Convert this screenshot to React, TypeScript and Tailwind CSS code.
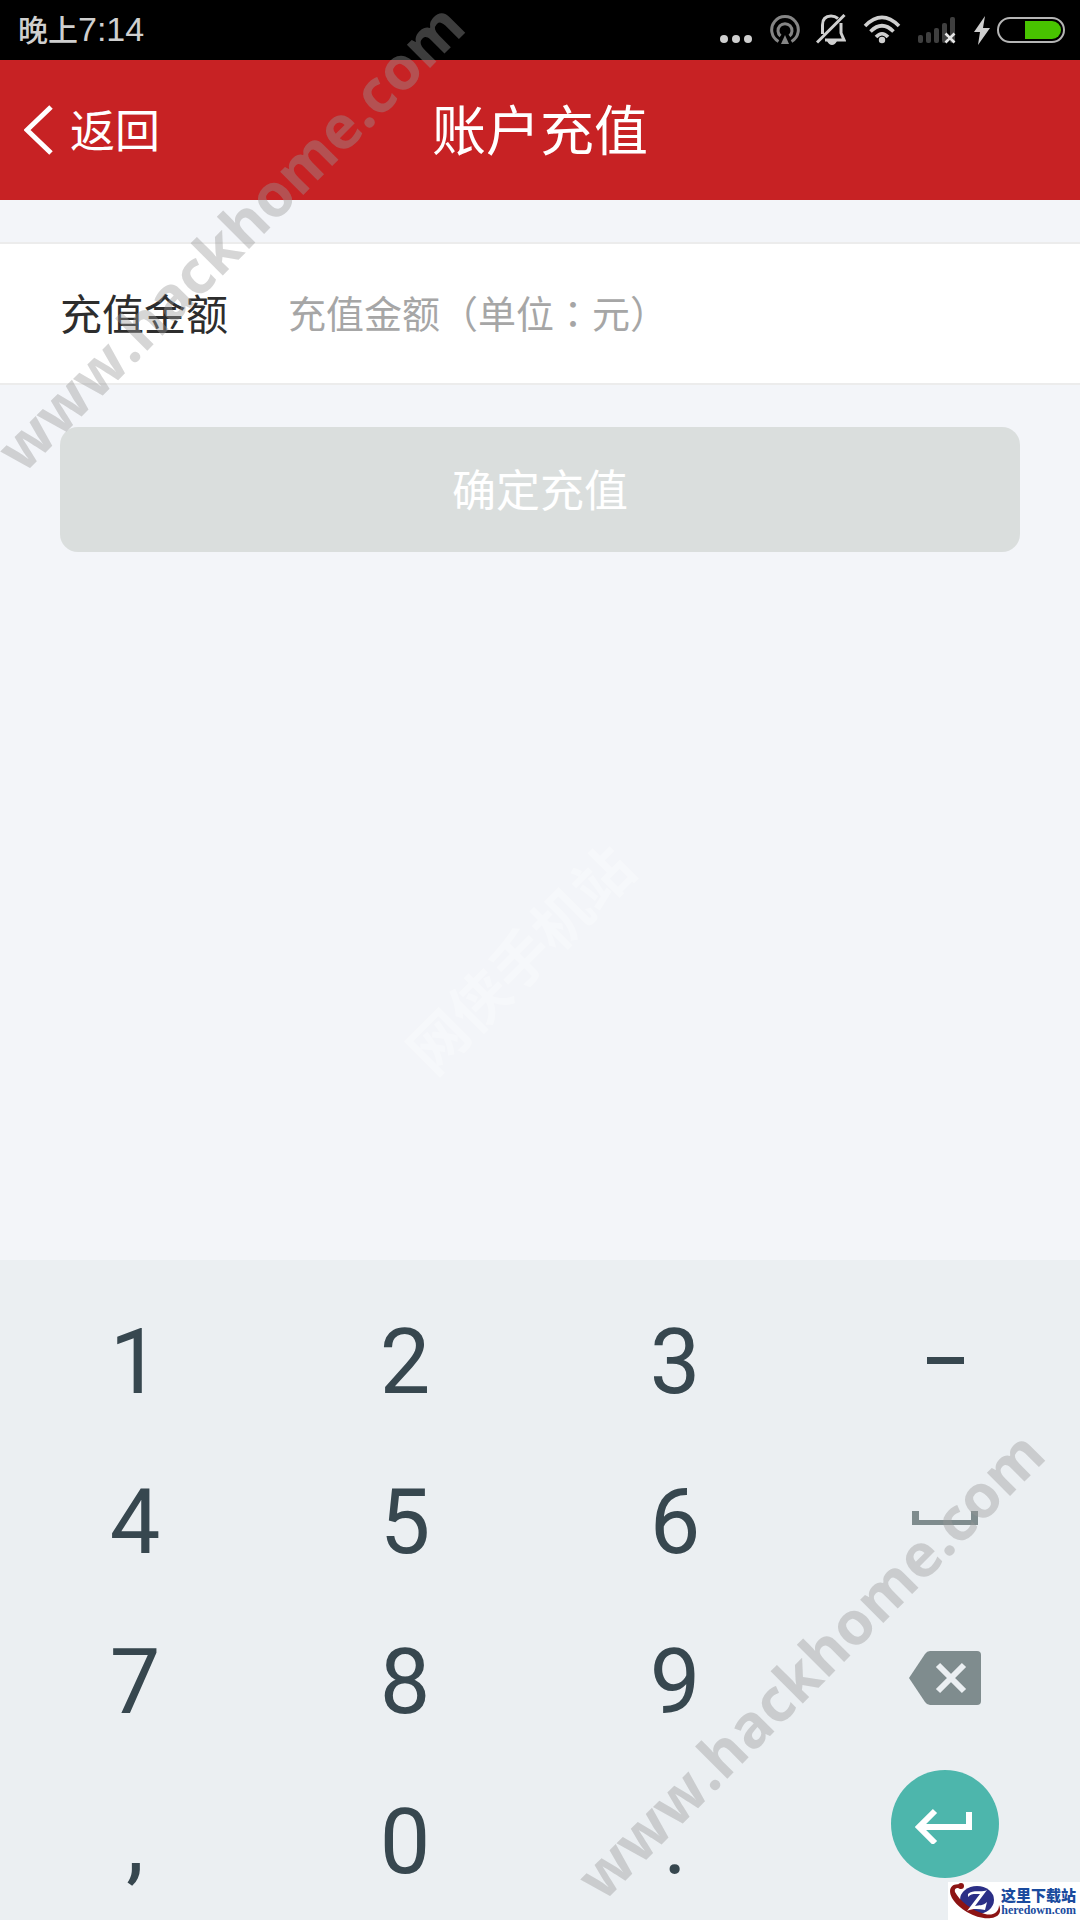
import React, { useState } from 'react';

const KEYS = ['1', '2', '3', '-', '4', '5', '6', 'space', '7', '8', '9', 'del', ',', '0', '.', 'enter'];

const StatusIcons: React.FC = () => (
  <div className="flex items-center gap-4 text-[#cfcfcf]">
    <svg width="34" height="32" viewBox="0 0 34 32" fill="currentColor">
      <circle cx="4" cy="25" r="4" />
      <circle cx="16" cy="25" r="4" />
      <circle cx="28" cy="25" r="4" />
    </svg>

    {/* Hotspot */}
    <svg width="30" height="32" viewBox="0 0 30 32" fill="none" stroke="#858585" strokeWidth="3">
      <path d="M8.5 27.5 A13.3 13.3 0 1 1 21.5 27.5" />
      <path d="M10.5 22 A7 7 0 1 1 19.5 22" />
      <path d="M15 21 L19 30 H11 Z" fill="#858585" stroke="none" />
    </svg>

    {/* Muted bell */}
    <svg width="30" height="32" viewBox="0 0 30 32" fill="none" stroke="currentColor" strokeWidth="3">
      <path d="M6.5 20 V11 Q6.5 2 15 2 Q19 2 22 4.5" />
      <path d="M25 9 V19 L28 26 H9" />
      <path d="M1 28.5 L28.5 1" />
      <path d="M11 27 H21 Q19 31 16 31 Q13 31 11 27 Z" fill="currentColor" stroke="none" />
    </svg>

    {/* Wifi */}
    <svg width="40" height="32" viewBox="0 0 40 32" fill="none" stroke="currentColor" strokeWidth="3.6">
      <path d="M3 12 Q20 -5 37 12" />
      <path d="M8.5 17.5 Q20 6 31.5 17.5" />
      <path d="M14 23 Q20 16.5 26 23" />
      <circle cx="20" cy="26" r="3.2" fill="currentColor" stroke="none" />
    </svg>

    {/* No signal */}
    <svg width="40" height="32" viewBox="0 0 40 32">
      <g fill="#3f3f3f">
        <rect x="0" y="21" width="5" height="8" rx="2" />
        <rect x="8" y="18" width="5" height="11" rx="2" />
        <rect x="16" y="14" width="5" height="15" rx="2" />
        <rect x="24" y="9" width="5" height="20" rx="2" />
        <rect x="32" y="3" width="5" height="26" rx="2" />
      </g>
      <path d="M27.5 19.5 L36.5 28.5 M36.5 19.5 L27.5 28.5" stroke="#e6e6e6" strokeWidth="2.6" />
    </svg>

    <div className="flex items-center gap-1.5">
      <svg width="16" height="32" viewBox="0 0 16 32" fill="currentColor">
        <path d="M11 2 L0 18 H6 L4 31 L16 14 H9 Z" />
      </svg>
      <svg width="70" height="32" viewBox="0 0 70 32">
        <rect x="2" y="4" width="66" height="24" rx="12" fill="none" stroke="#b5b5b5" strokeWidth="2" />
        <path d="M29 7 H56 A9 9 0 0 1 56 25 H29 Z" fill="#48c400" />
      </svg>
    </div>
  </div>
);

const KeyFace: React.FC<{ name: string }> = ({ name }) => {
  if (name === '-') return <span className="block h-[7px] w-[37px] bg-[#37474f]" />;
  if (name === 'space') {
    return (
      <svg width="66" height="18" viewBox="0 0 66 18">
        <path d="M0 0 H7 V9 H59 V0 H66 V14 H0 Z" fill="#7f8c8e" />
      </svg>
    );
  }
  if (name === 'del') {
    return (
      <svg className="mb-1" width="72" height="54" viewBox="0 0 72 54">
        <path d="M0 27 L16 3 Q18 0 21 0 H68 Q72 0 72 4 V50 Q72 54 68 54 H21 Q18 54 16 51 Z" fill="#7f8c8e" />
        <path d="M29 14 L55 40 M55 14 L29 40" stroke="#ebeff2" strokeWidth="6" />
      </svg>
    );
  }
  if (name === 'enter') {
    return (
      <span className="mb-8 flex size-[108px] items-center justify-center rounded-full bg-[#4db6ac]">
        <svg width="60" height="40" viewBox="0 0 60 40" fill="none" stroke="#fff" strokeWidth="6">
          <path d="M54 8 V23 H6" />
          <path d="M20 7 L4 23 L20 39" />
        </svg>
      </span>
    );
  }
  return <span className="pt-1.5">{name}</span>;
};

const Watermark: React.FC<{ className: string }> = ({ className }) => (
  <div
    className={`pointer-events-none absolute origin-bottom-left -rotate-45 whitespace-nowrap font-['Open_Sans',sans-serif] text-[60px] font-bold leading-none text-[#999999]/40 ${className}`}
  >
    www.hackhome.com
  </div>
);

export default function App() {
  const [amount, setAmount] = useState('');

  const press = (key: string) => {
    if (key === 'enter') return;
    if (key === 'del') setAmount(prev => prev.slice(0, -1));
    else setAmount(prev => prev + (key === 'space' ? ' ' : key));
  };

  return (
    <div lang="zh-CN" className="relative flex min-h-screen flex-col overflow-hidden bg-[#f3f5f9] font-['Noto_Sans_CJK_SC',sans-serif]">
      {/* Status bar */}
      <div className="flex h-[60px] items-center justify-between bg-black pl-[18px] pr-3.5">
        <div className="flex items-center pb-0.5 text-[30px] leading-none text-[#cfcfcf]">
          <span className="pb-0.5 font-medium">晚上</span>
          <span className="font-['Liberation_Sans',sans-serif] text-[34px]">7:14</span>
        </div>
        <StatusIcons />
      </div>

      <header className="grid h-[140px] grid-cols-3 items-center bg-[#c72224] text-white">
        <button type="button" className="flex items-center gap-4 pl-6 text-[45px] leading-none">
          <svg width="30" height="52" viewBox="0 0 30 52" fill="none" stroke="currentColor" strokeWidth="5">
            <path d="M27 3 L3 26 L27 49" />
          </svg>
          <span className="pb-1">返回</span>
        </button>
        <h1 className="pb-1 text-center text-[54px] leading-none">账户充值</h1>
      </header>

      <main className="flex-1 pt-[42px]">
        <div className="flex items-center border-y-2 border-[#ececec] bg-white px-[60px]">
          <label htmlFor="amount" className="w-[228px] pb-1 text-[42px] leading-none text-[#2d2d2d]">
            充值金额
          </label>
          <input
            id="amount"
            lang="zh-TW"
            value={amount}
            onChange={e => setAmount(e.target.value)}
            placeholder="充值金额（单位：元）"
            className="h-[139px] min-w-0 flex-1 bg-transparent pb-1 font-['Noto_Sans_CJK_TC',sans-serif] text-[38px] text-[#2d2d2d] outline-none placeholder:text-[#a6a6a6]"
          />
        </div>
        <div className="px-[60px] pt-[42px]">
          <button
            type="button"
            disabled={!amount}
            className="h-[125px] w-full rounded-[18px] bg-[#c72224] pb-1 text-[44px] leading-none text-white disabled:bg-[#dadedd]"
          >
            确定充值
          </button>
        </div>
      </main>

      {/* Numeric keyboard */}
      <div className="grid grid-cols-4 bg-[#ebeff2] pt-5 font-['Roboto',sans-serif] text-[90px] leading-none text-[#37474f]">
        {KEYS.map(key => (
          <button key={key} type="button" aria-label={key} onClick={() => press(key)} className="flex h-[160px] items-center justify-center">
            <KeyFace name={key} />
          </button>
        ))}
      </div>

      <Watermark className="left-[28px] top-[420px]" />
      <Watermark className="bottom-[12px] left-[608px]" />
      <div className="pointer-events-none absolute left-[518px] top-[957px] -translate-x-1/2 -translate-y-1/2 -rotate-45 whitespace-nowrap text-[58px] font-bold leading-none text-white/30">
        网侠手机站
      </div>

      {/* Site badge */}
      <div className="absolute bottom-0 right-0 flex h-[38px] items-center bg-white pr-1">
        <svg width="53" height="38" viewBox="0 0 53 38">
          <ellipse cx="29" cy="18" rx="17" ry="14" fill="#2b2f86" />
          <path d="M14 3 C4 0 -1 7 4 16 C11 28 30 38 43 36 C51 35 54 30 51 23 C51 31 44 34 37 32 C24 29 11 18 7 10 C6 6 9 5 13 7 Z" fill="#8c1414" />
          <circle cx="13" cy="4" r="3" fill="#8c1414" />
          <path d="M20 12 C25 7 34 11 39 8 L27 24 C31 23 35 24 39 20 L37 28 C31 27 25 26 19 29 L32 12 C28 12 23 11 20 15 Z" fill="#fff" />
        </svg>
        <div className="flex flex-col items-end text-[#1a4b9e]">
          <span className="text-[15px] font-black leading-[18px]">这里下载站</span>
          <span className="font-['Liberation_Serif',serif] text-[12px] font-bold leading-[12px]">heredown.com</span>
        </div>
      </div>
    </div>
  );
}
